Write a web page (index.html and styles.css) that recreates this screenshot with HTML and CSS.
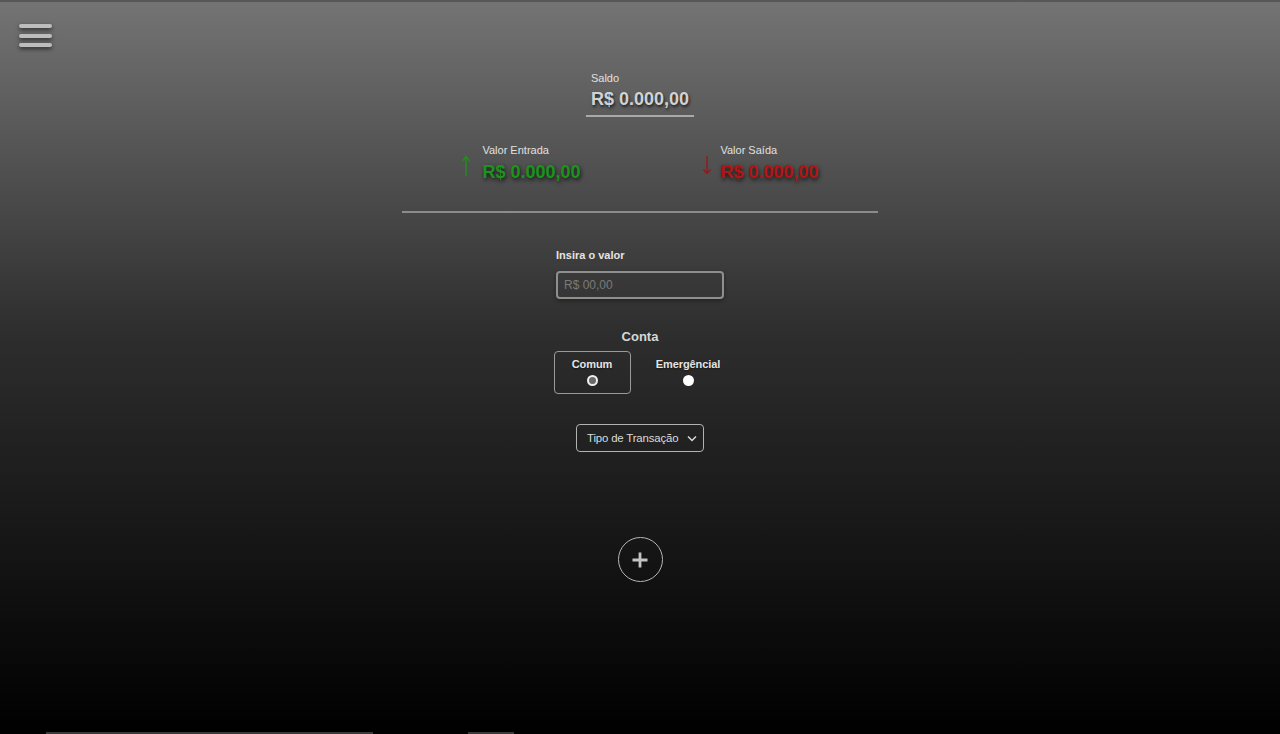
FILE: index.html
```html
<!DOCTYPE html>
<html lang="pt-BR">
<head>
<meta charset="utf-8">
<title>Carteira</title>
<link rel="stylesheet" href="styles.css">
</head>
<body>
<header class="topbar">
  <button class="menu-btn" aria-label="Menu">
    <span class="bar"></span><span class="bar"></span><span class="bar"></span>
  </button>
</header>
<main class="main">
  <section class="saldo">
    <div class="saldo-label">Saldo</div>
    <div class="saldo-value">R$ 0.000,00</div>
  </section>

  <section class="flows">
    <div class="flow">
      <svg class="arrow" width="10" height="22" viewBox="0 0 10 22">
        <path d="M5 21V2M1.5 6L5 1.5L8.5 6" fill="none" stroke="#1f8f1f" stroke-width="1.4"/>
      </svg>
      <div class="flow-text">
        <div class="flow-label">Valor Entrada</div>
        <div class="flow-value in">R$ 0.000,00</div>
      </div>
    </div>
    <div class="flow">
      <svg class="arrow out" width="10" height="22" viewBox="0 0 10 22">
        <path d="M5 1V18M1.5 14.5L5 18.5L8.5 14.5" fill="none" stroke="#9a1515" stroke-width="1.3"/>
      </svg>
      <div class="flow-text">
        <div class="flow-label">Valor Saída</div>
        <div class="flow-value out">R$ 0.000,00</div>
      </div>
    </div>
  </section>

  <hr class="divider">

  <div class="field">
    <label class="field-label" for="valor">Insira o valor</label>
    <input class="field-input" id="valor" type="text" placeholder="R$ 00,00">
  </div>

  <div class="conta-title">Conta</div>
  <div class="contas">
    <label class="conta selected">
      <span class="conta-name">Comum</span>
      <span class="radio checked"></span>
    </label>
    <label class="conta">
      <span class="conta-name">Emergêncial</span>
      <span class="radio"></span>
    </label>
  </div>

  <div class="select">
    <span class="select-text">Tipo de Transação</span>
    <svg class="chev" width="10" height="7" viewBox="0 0 10 7">
      <path d="M1 1.5L5 5.5L9 1.5" fill="none" stroke="#dcdcdc" stroke-width="1.5"/>
    </svg>
  </div>

  <button class="add-btn" aria-label="Adicionar">
    <svg width="18" height="18" viewBox="0 0 18 18">
      <path d="M9 1.5V16.5M1.5 9H16.5" stroke="#c4c4c4" stroke-width="2.8"/>
    </svg>
  </button>
</main>
<footer class="scrollbar">
  <span class="thumb long"></span>
  <span class="thumb short"></span>
</footer>
</body>
</html>
```

FILE: styles.css
```css
html, body {
  margin: 0;
  padding: 0;
}
body {
  height: 734px;
  box-sizing: border-box;
  display: flex;
  flex-direction: column;
  border-top: 2px solid #575757;
  background: linear-gradient(to bottom, #747474 0%, #2e2e2e 45%, #151515 75%, #000 100%);
  font-family: "Liberation Sans", Arial, sans-serif;
  color: #dcdcdc;
  overflow: hidden;
}
.topbar {
  padding: 22px 0 0 19px;
  height: 24px;
}
.menu-btn {
  display: flex;
  flex-direction: column;
  gap: 5.5px;
  width: 33px;
  padding: 0;
  border: 0;
  background: none;
}
.bar {
  display: block;
  width: 33px;
  height: 4px;
  border-radius: 2px;
  background: #bdbdbd;
  box-shadow: 0 2px 4px rgba(0,0,0,0.6);
}
.main {
  flex: 1;
  display: flex;
  flex-direction: column;
  align-items: center;
}
.saldo {
  margin-top: 24px;
  padding: 0 5px 5px;
  border-bottom: 2px solid #a9a9a9;
}
.saldo-label {
  font-size: 11px;
  line-height: 13px;
  color: #e0e0e0;
}
.saldo-value {
  margin-top: 3px;
  font-size: 18px;
  line-height: 22px;
  font-weight: bold;
  color: #d2d2d2;
  text-shadow: 1px 2px 3px rgba(0,0,0,0.7);
}
.flows {
  margin-top: 27px;
  width: 476px;
  display: flex;
  justify-content: space-around;
}
.flow {
  display: flex;
  align-items: flex-start;
  gap: 11px;
}
.arrow {
  margin-top: 11px;
}
.arrow.out {
  margin-left: 3px;
  margin-right: -3px;
}
.flow-label {
  font-size: 11px;
  line-height: 13px;
  color: #e0e0e0;
}
.flow-value {
  margin-top: 4px;
  font-size: 18px;
  line-height: 22px;
  font-weight: bold;
  text-shadow: 1px 2px 4px rgba(0,0,0,0.8);
}
.flow-value.in { color: #1c931c; }
.flow-value.out { color: #b31414; }
.divider {
  margin: 28px 0 0;
  width: 476px;
  height: 2px;
  border: 0;
  background: #8c8c8c;
}
.field {
  margin-top: 36px;
  display: flex;
  flex-direction: column;
  width: 168px;
}
.field-label {
  font-size: 11px;
  line-height: 13px;
  font-weight: bold;
  color: #e4e4e4;
}
.field-input {
  margin-top: 9px;
  box-sizing: border-box;
  width: 168px;
  height: 28px;
  padding: 0 6px;
  border: 2px solid #8f8f8f;
  border-radius: 4px;
  background: transparent;
  font-family: "Liberation Sans", Arial, sans-serif;
  font-size: 12px;
  color: #ddd;
  box-shadow: 0 2px 4px rgba(0,0,0,0.35);
  outline: none;
}
.field-input::placeholder { color: #7a7a7a; }
.conta-title {
  margin-top: 30px;
  font-size: 13px;
  line-height: 15px;
  font-weight: bold;
  color: #d8d8d8;
}
.contas {
  margin-top: 7px;
  display: flex;
  gap: 19px;
}
.conta {
  box-sizing: border-box;
  width: 77px;
  height: 43px;
  padding-top: 6px;
  display: flex;
  flex-direction: column;
  align-items: center;
  border: 1.5px solid transparent;
  border-radius: 4px;
}
.conta.selected {
  border-color: #9a9a9a;
}
.conta-name {
  font-size: 11px;
  line-height: 13px;
  font-weight: bold;
  letter-spacing: -0.1px;
  color: #e4e4e4;
  text-shadow: 0 1px 2px rgba(0,0,0,0.5);
}
.radio {
  margin-top: 4px;
  box-sizing: border-box;
  width: 11px;
  height: 11px;
  border-radius: 50%;
  background: #fff;
}
.radio.checked {
  background: #6a6a6a;
  border: 2px solid #f0f0f0;
}
.select {
  margin-top: 30px;
  box-sizing: border-box;
  width: 128px;
  height: 28px;
  padding: 0 6px 0 10px;
  display: flex;
  align-items: center;
  justify-content: space-between;
  border: 1.5px solid #b2b2b2;
  border-radius: 4px;
}
.select-text {
  font-size: 11.4px;
  letter-spacing: -0.15px;
  white-space: nowrap;
  color: #dcdcdc;
}
.add-btn {
  margin-top: 85px;
  width: 45px;
  height: 45px;
  padding: 0;
  box-sizing: border-box;
  display: flex;
  align-items: center;
  justify-content: center;
  border: 1.5px solid #b5b5b5;
  border-radius: 50%;
  background: transparent;
}
.scrollbar {
  height: 2px;
  display: flex;
  gap: 95px;
  padding-left: 46px;
}
.thumb {
  display: block;
  height: 2px;
  background: #3a3a3a;
}
.thumb.long { width: 327px; }
.thumb.short { width: 46px; }
```
